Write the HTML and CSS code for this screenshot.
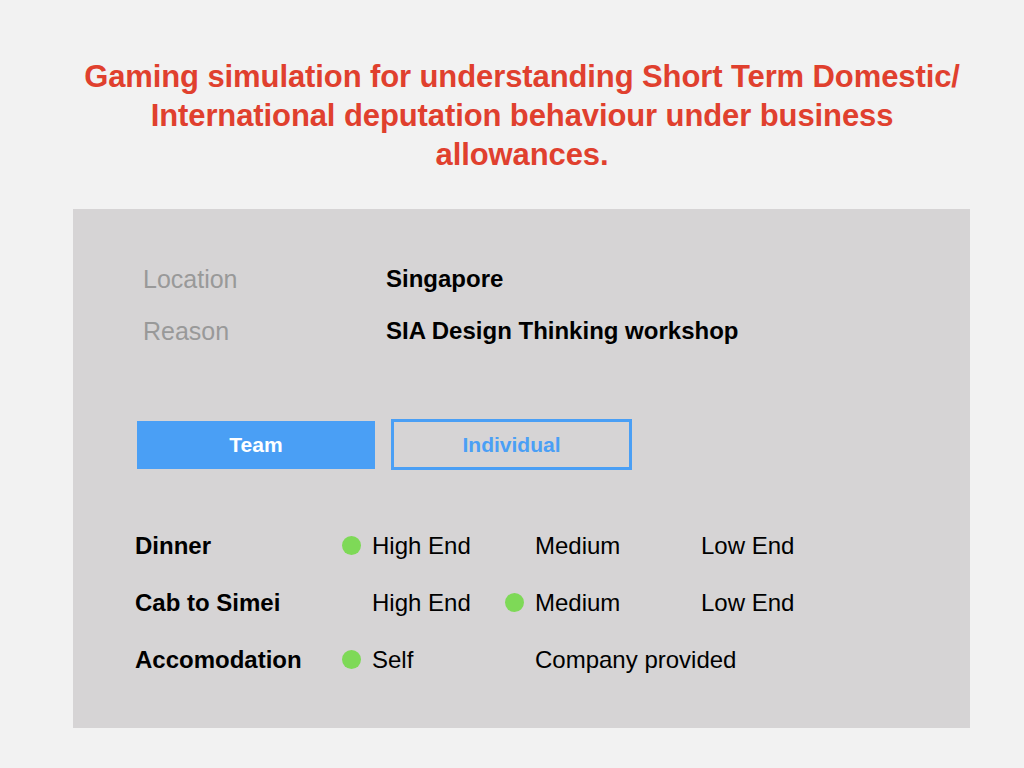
FILE: index.html
```html
<!DOCTYPE html>
<html>
<head>
<meta charset="utf-8">
<link rel="stylesheet" href="styles.css">
</head>
<body>
<h1 class="title">Gaming simulation for understanding Short Term Domestic/<br>International deputation behaviour under business<br>allowances.</h1>
<main class="panel">
  <div class="info">
    <div class="info-row"><span class="info-label">Location</span><span class="info-value">Singapore</span></div>
    <div class="info-row"><span class="info-label">Reason</span><span class="info-value">SIA Design Thinking workshop</span></div>
  </div>
  <div class="toggle">
    <button class="btn btn-active">Team</button>
    <button class="btn btn-outline">Individual</button>
  </div>
  <div class="options">
    <span class="opt-label">Dinner</span>
    <span class="opt"><i class="dot"></i>High End</span>
    <span class="opt"><i class="dot off"></i>Medium</span>
    <span class="opt"><i class="dot off"></i>Low End</span>

    <span class="opt-label">Cab to Simei</span>
    <span class="opt"><i class="dot off"></i>High End</span>
    <span class="opt"><i class="dot"></i>Medium</span>
    <span class="opt"><i class="dot off"></i>Low End</span>

    <span class="opt-label">Accomodation</span>
    <span class="opt"><i class="dot"></i>Self</span>
    <span class="opt opt-wide"><i class="dot off"></i>Company provided</span>
  </div>
</main>
</body>
</html>
```

FILE: styles.css
```css
html, body {
  margin: 0;
  padding: 0;
  background: #f2f2f2;
  font-family: "Liberation Sans", Arial, Helvetica, sans-serif;
}

.title {
  margin: 57px 0 35px 20px;
  text-align: center;
  color: #e0402e;
  font-size: 31px;
  line-height: 39px;
  font-weight: bold;
  letter-spacing: -0.1px;
}

.panel {
  margin-left: 73px;
  width: 897px;
  height: 519px;
  box-sizing: border-box;
  background: #d6d4d5;
  padding: 44px 0 0 0;
}

.info {
  padding-left: 70px;
}

.info-row {
  display: flex;
  height: 52px;
  align-items: center;
  font-size: 24px;
}

.info-label {
  width: 243px;
  color: #999999;
  font-size: 25px;
}

.info-value {
  color: #000;
  font-weight: bold;
}

.toggle {
  margin-top: 62px;
  padding-left: 64px;
  display: flex;
  align-items: center;
  gap: 16px;
  height: 51px;
}

.btn {
  font-family: inherit;
  font-size: 21px;
  font-weight: bold;
  box-sizing: border-box;
  cursor: pointer;
  padding: 0;
}

.btn-active {
  width: 238px;
  height: 48px;
  background: #4a9ff5;
  color: #fff;
  border: none;
}

.btn-outline {
  width: 241px;
  height: 51px;
  background: transparent;
  color: #4a9ff5;
  border: 3px solid #4a9ff5;
}

.options {
  margin-top: 47px;
  padding-left: 62px;
  display: grid;
  grid-template-columns: 207px 163px 166px auto;
  grid-auto-rows: 57px;
  align-items: center;
  font-size: 24px;
  color: #000;
}

.opt-label {
  font-weight: bold;
}

.opt {
  display: flex;
  align-items: center;
  gap: 11px;
  white-space: nowrap;
}

.opt-wide {
  grid-column: span 2;
}

.dot {
  width: 19px;
  height: 19px;
  border-radius: 50%;
  background: #7ed957;
  flex: none;
}

.dot.off {
  visibility: hidden;
}
```
